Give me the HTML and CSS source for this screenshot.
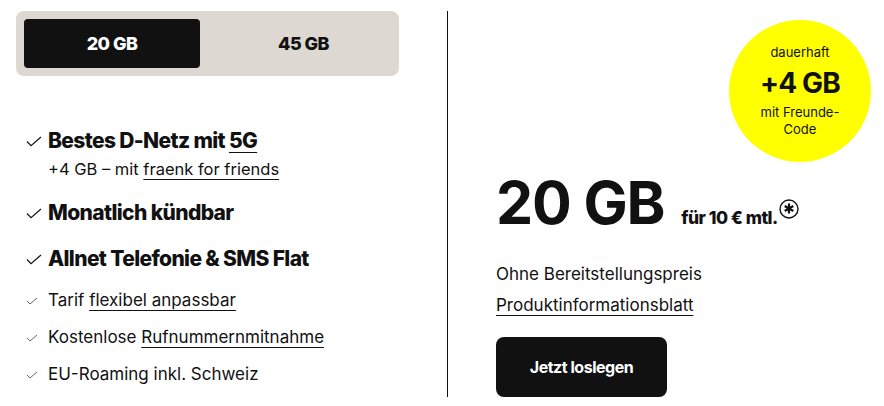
FILE: index.html
```html
<!DOCTYPE html>
<html lang="de">
<head>
    <meta charset="UTF-8">
    <meta name="viewport" content="width=device-width, initial-scale=1.0">
    <title>fraenk Tarif</title>
    <link rel="stylesheet" href="styles.css">
</head>
<body>
    <div class="tariff">
        <div class="features">
            <div class="switch">
                <button class="switch-tab active">20 GB</button>
                <button class="switch-tab">45 GB</button>
            </div>

            <ul class="list">
                <li class="item big">
                    <svg class="check" width="16" height="11" viewBox="0 0 16 11"><path d="M1 5.5l4 4.2L15 1" fill="none" stroke="#111" stroke-width="1.2"/></svg>
                    <div>
                        <div>Bestes D-Netz mit <a href="#">5G</a></div>
                        <div class="sub">+4 GB – mit <a href="#">fraenk for friends</a></div>
                    </div>
                </li>
                <li class="item big">
                    <svg class="check" width="16" height="11" viewBox="0 0 16 11"><path d="M1 5.5l4 4.2L15 1" fill="none" stroke="#111" stroke-width="1.2"/></svg>
                    <div>Monatlich kündbar</div>
                </li>
                <li class="item big">
                    <svg class="check" width="16" height="11" viewBox="0 0 16 11"><path d="M1 5.5l4 4.2L15 1" fill="none" stroke="#111" stroke-width="1.2"/></svg>
                    <div>Allnet Telefonie &amp; SMS Flat</div>
                </li>
                <li class="item small">
                    <svg class="check" width="12" height="8" viewBox="0 0 12 8"><path d="M1 4l3 3L11 1" fill="none" stroke="#666" stroke-width="1"/></svg>
                    <div>Tarif <a href="#">flexibel anpassbar</a></div>
                </li>
                <li class="item small">
                    <svg class="check" width="12" height="8" viewBox="0 0 12 8"><path d="M1 4l3 3L11 1" fill="none" stroke="#666" stroke-width="1"/></svg>
                    <div>Kostenlose <a href="#">Rufnummernmitnahme</a></div>
                </li>
                <li class="item small">
                    <svg class="check" width="12" height="8" viewBox="0 0 12 8"><path d="M1 4l3 3L11 1" fill="none" stroke="#666" stroke-width="1"/></svg>
                    <div>EU-Roaming inkl. Schweiz</div>
                </li>
            </ul>
        </div>

        <div class="offer">
            <div class="badge">
                <span class="badge-small">dauerhaft</span>
                <span class="badge-big">+4 GB</span>
                <span class="badge-small">mit Freunde-<br>Code</span>
            </div>

            <div class="price">
                <span class="volume">20 GB</span>
                <span class="cost">für 10 € mtl.<svg class="star" width="20" height="20" viewBox="0 0 20 20"><circle cx="10" cy="10" r="9" fill="none" stroke="#111" stroke-width="1.4"/><path d="M10 4.5v10M5.7 7l8.6 5M5.7 12l8.6-5" stroke="#111" stroke-width="2.2"/></svg></span>
            </div>

            <p class="note">Ohne Bereitstellungspreis</p>
            <a class="info" href="#">Produktinformationsblatt</a>

            <button class="cta">Jetzt loslegen</button>
        </div>
    </div>
</body>
</html>
```

FILE: styles.css
```css
body {
    margin: 0;
    background: #fff;
    color: #111;
    font-family: Inter, "Noto Sans", sans-serif;
}

a {
    color: #111;
    text-decoration: underline;
    text-underline-offset: 4px;
    text-decoration-thickness: 1px;
}

.tariff {
    display: flex;
    width: 884px;
    height: 406px;
}

.features {
    width: 447px;
    padding: 11px 0 0 16px;
    box-sizing: border-box;
}

.switch {
    display: flex;
    width: 383px;
    height: 65px;
    padding: 8px;
    box-sizing: border-box;
    background: #ddd8d2;
    border-radius: 8px;
}

.switch-tab {
    flex: 1;
    padding: 0 0 0 16px;
    border: none;
    background: transparent;
    font-family: inherit;
    font-size: 18px;
    font-weight: 800;
    letter-spacing: -0.03em;
    color: #111;
    border-radius: 4px;
}

.switch-tab.active {
    flex: none;
    width: 176px;
    padding: 0;
    background: #111;
    color: #fff;
}

.list {
    list-style: none;
    margin: 51px 0 0;
    padding: 0 0 0 8px;
}

.item {
    display: flex;
    align-items: flex-start;
}

.item.big {
    font-size: 21px;
    font-weight: 800;
    letter-spacing: -0.03em;
    line-height: 28px;
    margin-bottom: 18px;
}

.item.big:nth-child(3) {
    margin-bottom: 16px;
}

.item.big .check {
    margin: 9px 6px 0 2px;
}

.sub {
    font-size: 16.5px;
    font-weight: 400;
    letter-spacing: 0;
    line-height: 24px;
    margin-top: 2px;
}

.item.small {
    font-size: 17px;
    line-height: 22px;
    margin-bottom: 15px;
}

.item.small .check {
    margin: 8px 10px 0 2px;
}

.offer {
    position: relative;
    flex: 1;
    margin-top: 11px;
    height: 386px;
    border-left: 1px solid #111;
    padding: 160px 0 0 48px;
    box-sizing: border-box;
}

.badge {
    position: absolute;
    top: 9px;
    right: 13px;
    width: 142px;
    height: 142px;
    border-radius: 50%;
    background: #ffff00;
    display: flex;
    flex-direction: column;
    align-items: center;
    justify-content: center;
    text-align: center;
}

.badge-small {
    font-size: 13px;
    line-height: 17px;
}

.badge-big {
    font-size: 28px;
    font-weight: 700;
    letter-spacing: -0.03em;
    line-height: 36px;
    margin: 4px 0 3px;
}

.price {
    display: flex;
    align-items: baseline;
}

.volume {
    font-size: 59px;
    font-weight: 700;
    letter-spacing: -0.02em;
    line-height: 64px;
}

.cost {
    font-size: 17.5px;
    font-weight: 800;
    letter-spacing: -0.03em;
    margin-left: 17px;
}

.star {
    vertical-align: 5px;
    margin-left: 1px;
}

.note {
    margin: 28px 0 0;
    font-size: 17px;
    line-height: 22px;
}

.info {
    display: inline-block;
    margin-top: 9px;
    font-size: 17px;
    line-height: 22px;
}

.cta {
    display: block;
    margin-top: 21px;
    width: 171px;
    height: 60px;
    border: none;
    border-radius: 8px;
    background: #111;
    color: #fff;
    font-family: inherit;
    font-size: 16px;
    font-weight: 700;
    letter-spacing: -0.03em;
}
```
